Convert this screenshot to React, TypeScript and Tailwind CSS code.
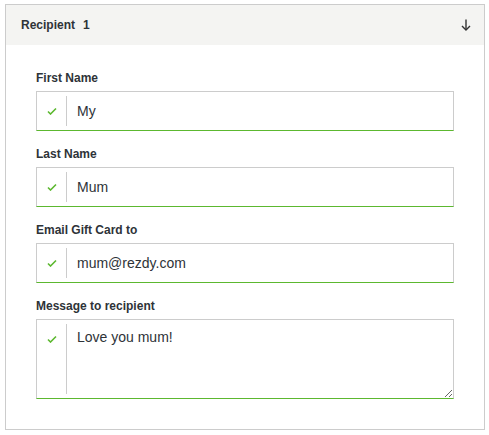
import React from "react";

const Check = () => (
  <svg width="10" height="8" viewBox="0 0 10 8" fill="none">
    <polyline points="1,4.5 3.5,7 9,1.5" stroke="#5cb82f" strokeWidth="1.6" fill="none" />
  </svg>
);

const Field = ({ label, value }: { label: string; value: string }) => (
  <div className="mb-[16px]">
    <div className="h-[14px] leading-[14px] text-[12px] font-bold text-[#2e3338] mb-[6px]">{label}</div>
    <div className="flex h-[40px] border border-[#cccccc] border-b-[#5cb82f] bg-white">
      <div className="w-[29px] flex items-center justify-center">
        <Check />
      </div>
      <div className="w-px bg-[#cccccc] my-[4px]" />
      <input
        defaultValue={value}
        readOnly
        className="flex-1 min-w-0 pl-[10px] text-[14px] text-[#2e3338] outline-none bg-transparent"
        style={{ fontFamily: "Arial, 'Liberation Sans', sans-serif" }}
      />
    </div>
  </div>
);

export default function App() {
  return (
    <div className="w-[489px] h-[435px] bg-white pt-[4px] pl-[5px]" style={{ fontFamily: "Arial, 'Liberation Sans', sans-serif" }}>
      <div className="w-[480px] h-[426px] border border-[#cccccc] flex flex-col">
        <div className="h-[40px] bg-[#f4f4f2] flex items-center justify-between pl-[15px] pr-[13px]">
          <div className="text-[12px] font-bold text-[#2e3338]">
            Recipient<span className="ml-[8px]">1</span>
          </div>
          <svg width="10" height="12" viewBox="0 0 10 12" fill="none">
            <line x1="5" y1="0.5" x2="5" y2="11" stroke="#333" strokeWidth="1.4" />
            <polyline points="1,7 5,11 9,7" stroke="#333" strokeWidth="1.4" fill="none" />
          </svg>
        </div>
        <div className="px-[30px] pt-[26px]">
          <Field label="First Name" value="My" />
          <Field label="Last Name" value="Mum" />
          <Field label="Email Gift Card to" value="mum@rezdy.com" />
          <div>
            <div className="h-[14px] leading-[14px] text-[12px] font-bold text-[#2e3338] mb-[6px]">Message to recipient</div>
            <div className="flex h-[80px] border border-[#cccccc] border-b-[#5cb82f] bg-white">
              <div className="w-[29px] flex justify-center pt-[15px]">
                <div className="h-[8px]"><Check /></div>
              </div>
              <div className="w-px bg-[#cccccc] my-[4px]" />
              <textarea
                defaultValue="Love you mum!"
                readOnly
                className="flex-1 min-w-0 h-full pl-[10px] pt-[9px] text-[14px] leading-[16px] text-[#2e3338] outline-none bg-transparent"
                style={{ fontFamily: "Arial, 'Liberation Sans', sans-serif" }}
              />
            </div>
          </div>
        </div>
      </div>
    </div>
  );
}
